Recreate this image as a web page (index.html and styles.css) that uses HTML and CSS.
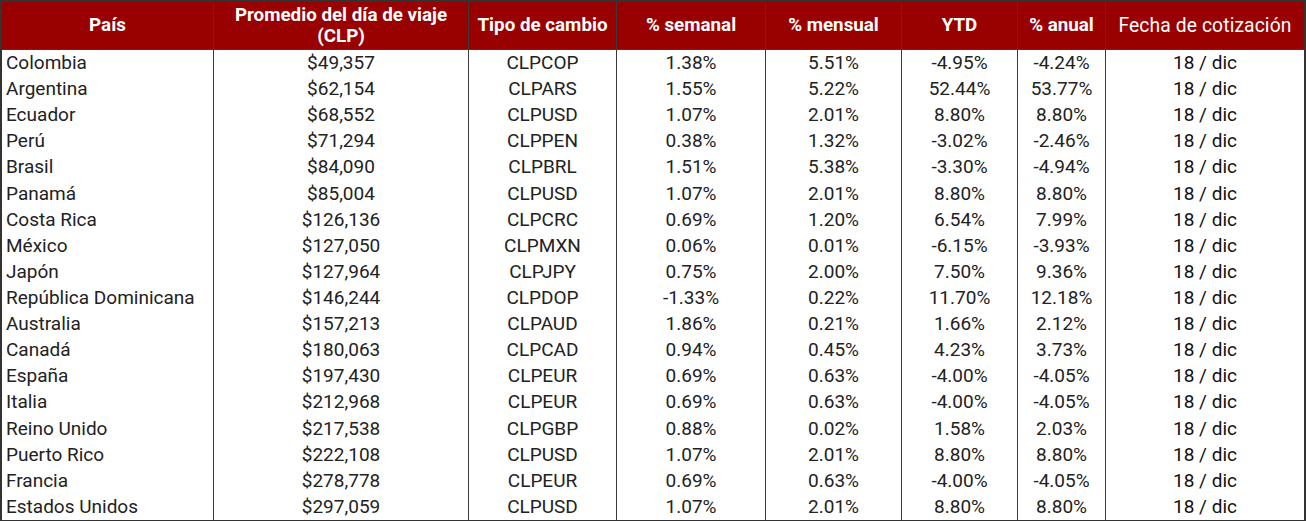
FILE: index.html
```html
<!DOCTYPE html>
<html lang="es">
<head>
<meta charset="utf-8">
<title>Tipo de cambio</title>
<link rel="stylesheet" href="styles.css">
</head>
<body>
<table class="fx">
<colgroup>
<col class="c1"><col class="c2"><col class="c3"><col class="c4"><col class="c5"><col class="c6"><col class="c7"><col class="c8">
</colgroup>
<thead>
<tr>
<th>País</th>
<th>Promedio del día de viaje<br>(CLP)</th>
<th>Tipo de cambio</th>
<th>% semanal</th>
<th>% mensual</th>
<th>YTD</th>
<th>% anual</th>
<th class="plain">Fecha de cotización</th>
</tr>
</thead>
<tbody>
<tr><td class="country">Colombia</td><td>$49,357</td><td>CLPCOP</td><td>1.38%</td><td>5.51%</td><td>-4.95%</td><td>-4.24%</td><td class="date">18 / dic</td></tr>
<tr><td class="country">Argentina</td><td>$62,154</td><td>CLPARS</td><td>1.55%</td><td>5.22%</td><td>52.44%</td><td>53.77%</td><td class="date">18 / dic</td></tr>
<tr><td class="country">Ecuador</td><td>$68,552</td><td>CLPUSD</td><td>1.07%</td><td>2.01%</td><td>8.80%</td><td>8.80%</td><td class="date">18 / dic</td></tr>
<tr><td class="country">Perú</td><td>$71,294</td><td>CLPPEN</td><td>0.38%</td><td>1.32%</td><td>-3.02%</td><td>-2.46%</td><td class="date">18 / dic</td></tr>
<tr><td class="country">Brasil</td><td>$84,090</td><td>CLPBRL</td><td>1.51%</td><td>5.38%</td><td>-3.30%</td><td>-4.94%</td><td class="date">18 / dic</td></tr>
<tr><td class="country">Panamá</td><td>$85,004</td><td>CLPUSD</td><td>1.07%</td><td>2.01%</td><td>8.80%</td><td>8.80%</td><td class="date">18 / dic</td></tr>
<tr><td class="country">Costa Rica</td><td>$126,136</td><td>CLPCRC</td><td>0.69%</td><td>1.20%</td><td>6.54%</td><td>7.99%</td><td class="date">18 / dic</td></tr>
<tr><td class="country">México</td><td>$127,050</td><td>CLPMXN</td><td>0.06%</td><td>0.01%</td><td>-6.15%</td><td>-3.93%</td><td class="date">18 / dic</td></tr>
<tr><td class="country">Japón</td><td>$127,964</td><td>CLPJPY</td><td>0.75%</td><td>2.00%</td><td>7.50%</td><td>9.36%</td><td class="date">18 / dic</td></tr>
<tr><td class="country">República Dominicana</td><td>$146,244</td><td>CLPDOP</td><td>-1.33%</td><td>0.22%</td><td>11.70%</td><td>12.18%</td><td class="date">18 / dic</td></tr>
<tr><td class="country">Australia</td><td>$157,213</td><td>CLPAUD</td><td>1.86%</td><td>0.21%</td><td>1.66%</td><td>2.12%</td><td class="date">18 / dic</td></tr>
<tr><td class="country">Canadá</td><td>$180,063</td><td>CLPCAD</td><td>0.94%</td><td>0.45%</td><td>4.23%</td><td>3.73%</td><td class="date">18 / dic</td></tr>
<tr><td class="country">España</td><td>$197,430</td><td>CLPEUR</td><td>0.69%</td><td>0.63%</td><td>-4.00%</td><td>-4.05%</td><td class="date">18 / dic</td></tr>
<tr><td class="country">Italia</td><td>$212,968</td><td>CLPEUR</td><td>0.69%</td><td>0.63%</td><td>-4.00%</td><td>-4.05%</td><td class="date">18 / dic</td></tr>
<tr><td class="country">Reino Unido</td><td>$217,538</td><td>CLPGBP</td><td>0.88%</td><td>0.02%</td><td>1.58%</td><td>2.03%</td><td class="date">18 / dic</td></tr>
<tr><td class="country">Puerto Rico</td><td>$222,108</td><td>CLPUSD</td><td>1.07%</td><td>2.01%</td><td>8.80%</td><td>8.80%</td><td class="date">18 / dic</td></tr>
<tr><td class="country">Francia</td><td>$278,778</td><td>CLPEUR</td><td>0.69%</td><td>0.63%</td><td>-4.00%</td><td>-4.05%</td><td class="date">18 / dic</td></tr>
<tr><td class="country">Estados Unidos</td><td>$297,059</td><td>CLPUSD</td><td>1.07%</td><td>2.01%</td><td>8.80%</td><td>8.80%</td><td class="date">18 / dic</td></tr>
</tbody>
</table>
</body>
</html>
```

FILE: styles.css
```css
html, body {
  margin: 0;
  padding: 0;
  background: #ffffff;
}

.fx {
  border-collapse: separate;
  border-spacing: 0;
  table-layout: fixed;
  width: 1306px;
  border: 2px solid #333333;
  font-family: Roboto, "Liberation Sans", Arial, sans-serif;
  color: #222222;
}

.c1 { width: 212px; }
.c2 { width: 255px; }
.c3 { width: 148px; }
.c4 { width: 149px; }
.c5 { width: 136px; }
.c6 { width: 116px; }
.c7 { width: 88px; }
.c8 { width: auto; }

.fx th {
  background: #990000;
  color: #ffffff;
  font-weight: 700;
  font-size: 18.8px;
  line-height: 21px;
  height: 47px;
  padding: 0 1px;
  text-align: center;
  vertical-align: middle;
  white-space: nowrap;
  border-right: 1px solid #3a3a3a;
  border-bottom: 1px solid #3a3a3a;
}

.fx th.plain {
  font-weight: 400;
  font-size: 19.3px;
  letter-spacing: 0.1px;
}

.fx td {
  font-size: 19px;
  line-height: 26.11px;
  height: 26.11px;
  padding: 0;
  text-align: center;
  white-space: nowrap;
  border-right: 1px solid #3a3a3a;
}

.fx th:last-child,
.fx td:last-child {
  border-right: none;
}

.fx td.country {
  text-align: left;
  padding-left: 4px;
}

.fx td.date {
  color: #111111;
}
```
